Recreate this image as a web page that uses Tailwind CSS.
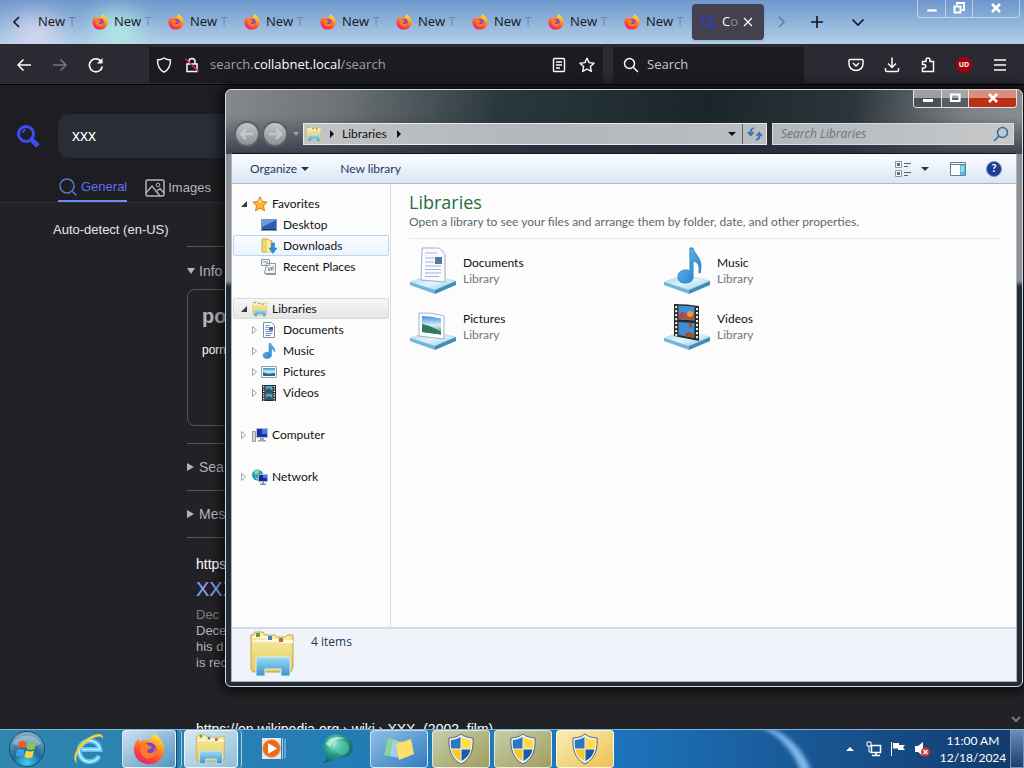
<!DOCTYPE html>
<html lang="en">
<head>
  <meta charset="UTF-8">
  <title>Libraries</title>
  <meta name="viewport" content="width=device-width, initial-scale=1">
  <script src="https://cdn.jsdelivr.net/npm/@tailwindcss/browser@4"></script>
</head>
<body class="relative h-screen flex flex-col overflow-hidden bg-[#222226] font-['Open_Sans','Noto_Sans',sans-serif] text-xs">

<!-- shared icons -->
<svg class="absolute size-0" aria-hidden="true">
  <defs>
    <linearGradient id="ffBody" x1="0.8" y1="0" x2="0.3" y2="1">
      <stop offset="0" stop-color="#fff44f"/><stop offset=".35" stop-color="#ff9a1f"/><stop offset=".7" stop-color="#ff4a35"/><stop offset="1" stop-color="#e8206e"/>
    </linearGradient>
    <linearGradient id="folder" x1="0" y1="0" x2="0" y2="1">
      <stop offset="0" stop-color="#f7efa8"/><stop offset="1" stop-color="#e5c95a"/>
    </linearGradient>
    <linearGradient id="stand" x1="0" y1="0" x2="0" y2="1">
      <stop offset="0" stop-color="#9adcf5"/><stop offset="1" stop-color="#3a93c6"/>
    </linearGradient>
    <linearGradient id="plate" x1="0" y1="0" x2="1" y2="1">
      <stop offset="0" stop-color="#9fd3ea"/><stop offset=".5" stop-color="#e3f4fb"/><stop offset="1" stop-color="#8cc7e2"/>
    </linearGradient>
    <linearGradient id="note" x1="0" y1="0" x2="1" y2="1">
      <stop offset="0" stop-color="#7cc9f5"/><stop offset="1" stop-color="#1a74c2"/>
    </linearGradient>
    <linearGradient id="sky" x1="0" y1="0" x2="0" y2="1">
      <stop offset="0" stop-color="#3f8fd6"/><stop offset=".5" stop-color="#d6eefa"/><stop offset="1" stop-color="#2f7f72"/>
    </linearGradient>
    <radialGradient id="orb" cx=".5" cy=".9" r=".9">
      <stop offset="0" stop-color="#45d0f2"/><stop offset=".45" stop-color="#1b6a9e"/><stop offset="1" stop-color="#8fb4c6"/>
    </radialGradient>
    <radialGradient id="teal" cx=".4" cy=".35" r=".7">
      <stop offset="0" stop-color="#a9f0d8"/><stop offset=".5" stop-color="#25a088"/><stop offset="1" stop-color="#0c5a56"/>
    </radialGradient>
  </defs>
  <symbol id="firefox" viewBox="0 0 16 16">
    <path d="M8 15.6C3.800 15.600.500 12.500.500 8.400.500 6 1.500 4 2.800 2.800c0 .9.300 1.400.7 1.700C4.700 3.300 6 3.300 6.800 3.600 8 3.300 9.600 2.800 10.200.2c2.800 1.400 5.300 4 5.300 8 0 4.200-3.300 7.400-7.500 7.400z" fill="url(#ffBody)"/>
    <circle cx="8" cy="8.600" r="3.800" fill="#7a3fd1"/>
    <path d="M3.500 5c1.800-.6 3.300 0 4.200 1.200 1 .1 1.900.5 1.700 1.100-.3.800-1.800.6-2.200 1.500-.3.900.9 1.700 2.300 1.100 1.100-.5 1.500-1.600 1-3 2 2.500.8 6-2.500 6C4.800 12.900 2.900 9 3.500 5z" fill="#ff7a26"/>
  </symbol>
  <symbol id="explorer" viewBox="0 0 48 48">
    <path d="M4 5l2-3h8l2 3h10l2 2h8l2-2h6v32l-2 5H4l-2-3V5z" fill="url(#folder)" stroke="#c2a54a"/>
    <path d="M4 11h40M4 7h13l3 3h10l3 2h11" fill="none" stroke="#fffbe0" stroke-width="2"/>
    <path d="M7 3h4v4H7z" fill="#6a9c45"/><path d="M19 6h4v4h-4z" fill="#4b7fbd"/><path d="M30 8h4v4h-4z" fill="#c4603f"/>
    <path d="M7 46V29q0-2 2-2h30q2 0 2 2v17h-9v-7H16v7z" fill="url(#stand)" stroke="#d8f1fa"/>
  </symbol>
  <symbol id="shield" viewBox="0 0 28 32">
    <path d="M14 1c3 2.500 7 3.700 12 4 .8 11-2 21-12 26C4 26 1.200 16 2 5c5-.3 9-1.500 12-4z" fill="#eef1f3" stroke="#59676f"/>
    <path d="M13.500 4v11.500H4.200C3.700 12 3.700 9.500 4 7c3.500-.3 6.800-1.300 9.500-3z" fill="#2a78c4"/>
    <path d="M14.500 4v11.500h9.300c.5-3.500.5-6 .2-8.500-3.500-.3-6.800-1.300-9.500-3z" fill="#ffdc45"/>
    <path d="M13.500 16.500V28c-5-2.500-8-6.500-9-11.500z" fill="#fbc926"/>
    <path d="M14.500 16.500V28c5-2.500 8-6.500 9-11.500z" fill="#1a5ca6"/>
  </symbol>
  <symbol id="base" viewBox="0 0 48 48">
    <path d="M1 35l21-7 25 6-21 9z" fill="url(#plate)" stroke="#a9d8ec" stroke-width=".6"/>
    <path d="M1 35l25 8v4L1 38z" fill="#6fb5d8"/><path d="M26 43l21-9v4l-21 9z" fill="#3e8db8"/>
  </symbol>
  <symbol id="document" viewBox="0 0 16 16">
    <path d="M2.500.500h8l3 3v12h-11z" fill="#fff" stroke="#7d8fae"/>
    <path d="M4.500 3.500h4M4.500 9.500h7M4.500 11.500h7M4.500 13.500h5M4.500 5.500h3M4.500 7.500h3" stroke="#6f8fc4"/><path d="M8 5h4v3.500H8z" fill="#3d5f95"/>
  </symbol>
  <symbol id="music" viewBox="0 0 16 16">
    <path d="M8 .5h2c.3 3 4.600 3.500 3.600 8.500-.6-2.200-1.600-3-3.100-3.300V12c0 2-1.800 3.500-4.500 3.500C3.500 15.500 2 14.300 2 12.500 2 10.500 4 9 6.500 9c.6 0 1 .1 1.500.3z" fill="url(#note)" stroke="#2a86cc" stroke-width=".5"/>
  </symbol>
  <symbol id="picture" viewBox="0 0 16 16">
    <path d="M.5 2.500h15v11H.5z" fill="#fff" stroke="#8ba0b2"/><path d="M2 4h12v8H2z" fill="url(#sky)"/><path d="M2 8l5 2 7-1v3H2z" fill="#256e78"/>
  </symbol>
  <symbol id="film" viewBox="0 0 16 16">
    <path d="M1 0h14v16H1z" fill="#20262c"/><path d="M4.500 1h7v6.500h-7zM4.500 8.500h7V15h-7z" fill="#5aa1c4"/><path d="M4.500 5l3-2 4 3v1.500h-7zM4.500 13l3-2 4 2v2h-7z" fill="#2b5668"/>
    <path d="M2.700 1v15M13.300 1v15" stroke="#fff" stroke-width="1.400" stroke-dasharray="1.200 1.200"/>
  </symbol>
  <symbol id="find" viewBox="0 0 16 16"><circle cx="6.500" cy="6.500" r="5" fill="none" stroke="currentColor" stroke-width="1.500"/><path d="M10.200 10.200l4.800 4.800" stroke="currentColor" stroke-width="1.500"/></symbol>
  <symbol id="open" viewBox="0 0 8 8"><path d="M7 1v6H1z" fill="#3a3a3a"/></symbol>
  <symbol id="closed" viewBox="0 0 8 8"><path d="M1.500.500v7l4-3.500z" fill="#fff" stroke="#a0a0a0"/></symbol>
</svg>

<!-- browser tab strip -->
<header class="relative flex h-11 shrink-0 overflow-hidden bg-linear-to-b from-[#6f97cc] via-[#8fb3da] to-[#b4d0e8] text-[13px] text-[#15151a]">
  <span class="absolute left-3 top-4 h-9 w-12 rounded-full bg-[#e3dcf3]/80 blur-md"></span>
  <span class="absolute left-24 top-3 h-9 w-11 rounded-full bg-[#b5f0e4]/90 blur-md"></span>
  <div class="relative flex flex-1 items-center">
    <button aria-label="Scroll left" class="w-[37px] pl-2.5"><svg class="size-3.5" viewBox="0 0 14 14"><path d="M9 2L4 7l5 5" fill="none" stroke="currentColor" stroke-width="1.600"/></svg></button>
    <button class="w-[55px] overflow-hidden border-l border-transparent text-left whitespace-nowrap">New <span class="opacity-30">T</span></button>
    <button class="flex w-19 items-center gap-1.5 whitespace-nowrap"><svg class="size-4"><use href="#firefox"/></svg><span>New <span class="opacity-25">T</span></span></button>
    <button class="flex w-19 items-center gap-1.5 whitespace-nowrap"><svg class="size-4"><use href="#firefox"/></svg><span>New <span class="opacity-25">T</span></span></button>
    <button class="flex w-19 items-center gap-1.5 whitespace-nowrap"><svg class="size-4"><use href="#firefox"/></svg><span>New <span class="opacity-25">T</span></span></button>
    <button class="flex w-19 items-center gap-1.5 whitespace-nowrap"><svg class="size-4"><use href="#firefox"/></svg><span>New <span class="opacity-25">T</span></span></button>
    <button class="flex w-19 items-center gap-1.5 whitespace-nowrap"><svg class="size-4"><use href="#firefox"/></svg><span>New <span class="opacity-25">T</span></span></button>
    <button class="flex w-19 items-center gap-1.5 whitespace-nowrap"><svg class="size-4"><use href="#firefox"/></svg><span>New <span class="opacity-25">T</span></span></button>
    <button class="flex w-19 items-center gap-1.5 whitespace-nowrap"><svg class="size-4"><use href="#firefox"/></svg><span>New <span class="opacity-25">T</span></span></button>
    <button class="flex w-[68px] items-center gap-1.5 whitespace-nowrap"><svg class="size-4"><use href="#firefox"/></svg><span>New <span class="opacity-25">T</span></span></button>
    <div class="flex h-9 w-[72px] items-center rounded-sm bg-[#42414d] pl-2 text-[#fbfbfe] shadow">
      <svg class="size-4 text-[#2f3cc8]" viewBox="0 0 16 16"><circle cx="6.500" cy="6.500" r="4.500" fill="none" stroke="currentColor" stroke-width="2"/><path d="M10 10l5 4.500" stroke="currentColor" stroke-width="3"/></svg>
      <span class="w-6 pl-1.5">C<span class="opacity-40">o</span></span>
      <button aria-label="Close tab" class="ml-0.5"><svg class="size-3" viewBox="0 0 12 12"><path d="M2 2l8 8M10 2l-8 8" stroke="currentColor" stroke-width="1.300"/></svg></button>
    </div>
    <button aria-label="Scroll right" class="ml-2.5"><svg class="size-3.5 text-[#5f7da3]" viewBox="0 0 14 14"><path d="M5 2l5 5-5 5" fill="none" stroke="currentColor" stroke-width="1.600"/></svg></button>
    <button aria-label="New tab" class="ml-[22px]"><svg class="size-3.5" viewBox="0 0 14 14"><path d="M7 1v12M1 7h12" stroke="currentColor" stroke-width="1.600"/></svg></button>
    <button aria-label="List all tabs" class="ml-[27px]"><svg class="size-3.5" viewBox="0 0 14 14"><path d="M1.500 4.500L7 10l5.500-5.500" fill="none" stroke="currentColor" stroke-width="1.600"/></svg></button>
  </div>
  <div class="relative mr-1 flex h-[18px] w-[103px] rounded-b border border-t-0 border-white/50 text-white">
    <button aria-label="Minimize" class="flex w-[28px] justify-center border-r border-white/50"><svg class="h-4 w-4" viewBox="0 0 16 16"><path d="M3 9h10v3H3z" fill="#fff" stroke="#6b8fb5" stroke-width=".5"/></svg></button>
    <button aria-label="Restore" class="flex w-[27px] justify-center border-r border-white/50"><svg class="h-4 w-4" viewBox="0 0 16 16"><path d="M6 5V3h7v7h-2M3.500 6.500h6v6h-6z" fill="none" stroke="#fff" stroke-width="2"/></svg></button>
    <button aria-label="Close" class="flex flex-1 justify-center"><svg class="h-4 w-4" viewBox="0 0 16 16"><path d="M4 4l8 8M12 4l-8 8" stroke="#fff" stroke-width="2.500"/></svg></button>
  </div>
</header>

<!-- browser toolbar -->
<nav class="flex h-10 shrink-0 items-center bg-[#2b2a33] pt-0.5 pr-4 text-[13px] text-[#fbfbfe]">
  <div class="flex w-[149px] items-center gap-5 pl-4">
    <button aria-label="Back"><svg class="size-4" viewBox="0 0 16 16"><path d="M15 8H2M7.500 2.500L2 8l5.500 5.500" fill="none" stroke="currentColor" stroke-width="1.500"/></svg></button>
    <button aria-label="Forward"><svg class="size-4 text-[#77767f]" viewBox="0 0 16 16"><path d="M1 8h13M8.500 2.500L14 8l-5.500 5.500" fill="none" stroke="currentColor" stroke-width="1.500"/></svg></button>
    <button aria-label="Reload"><svg class="size-4" viewBox="0 0 16 16"><path d="M13.500 5A6.500 6.500 0 1 0 14.300 9.500" fill="none" stroke="currentColor" stroke-width="1.600"/><path d="M14.500 1v5.500H9z" fill="currentColor"/></svg></button>
  </div>
  <div class="flex h-9 flex-[456] items-center bg-[#1c1b22] pl-[7px] pr-2">
    <svg class="size-4" viewBox="0 0 16 16"><path d="M8 1c2 1.300 4.200 1.800 6.500 2C14.500 9 12.500 13 8 15.200 3.500 13 1.500 9 1.500 3 3.800 2.800 6 2.300 8 1z" fill="none" stroke="currentColor" stroke-width="1.400"/></svg>
    <svg class="ml-3 size-4" viewBox="0 0 16 16"><path d="M3 7h10v7.500H3zM5 7V4.500a3 3 0 0 1 6 0V7" fill="none" stroke="currentColor" stroke-width="1.500"/><path d="M1.500 1.500l13 13" stroke="#e22850" stroke-width="1.500"/></svg>
    <span class="ml-2.5 flex-1 text-[#a09fa8]">search.<span class="text-[#fbfbfe]">collabnet.local</span>/search</span>
    <button aria-label="Reader view"><svg class="size-4" viewBox="0 0 16 16"><rect x="2.500" y="1.500" width="11" height="13" rx="1" fill="none" stroke="currentColor" stroke-width="1.400"/><path d="M5 5h6M5 8h6M5 11h4" stroke="currentColor" stroke-width="1.300"/></svg></button>
    <button aria-label="Bookmark" class="ml-3"><svg class="size-4" viewBox="0 0 16 16"><path d="M8 1.200l2.100 4.400 4.900.6-3.600 3.300.9 4.900L8 12l-4.300 2.400.9-4.900L1 6.200l4.900-.6z" fill="none" stroke="currentColor" stroke-width="1.400" stroke-linejoin="round"/></svg></button>
  </div>
  <div class="ml-2.5 flex h-9 flex-[188] items-center gap-2 bg-[#1c1b22] pl-2.5">
    <svg class="size-4 shrink-0"><use href="#find"/></svg>
    <input aria-label="Search the web" placeholder="Search" class="w-full bg-transparent outline-none placeholder:text-[#c9c8d0]">
  </div>
  <div class="ml-11 flex items-center gap-5">
    <button aria-label="Pocket"><svg class="size-4" viewBox="0 0 16 16"><path d="M2 2.500h12q1 0 1 1V7a7 6.500 0 0 1-14 0V3.500q0-1 1-1zM5 6l3 3 3-3" fill="none" stroke="currentColor" stroke-width="1.500"/></svg></button>
    <button aria-label="Downloads"><svg class="size-4" viewBox="0 0 16 16"><path d="M8 .5V10M4 6.500l4 4 4-4M1.500 11v2q0 1.500 1.500 1.500h10q1.500 0 1.500-1.500v-2" fill="none" stroke="currentColor" stroke-width="1.500"/></svg></button>
    <button aria-label="Extensions"><svg class="size-4" viewBox="0 0 16 16"><path d="M6 4.500V3a2 2 0 0 1 4 0v1.500h3.500v10h-11V11H4a1.500 1.500 0 0 0 0-3.500H2.500v-3z" fill="none" stroke="currentColor" stroke-width="1.500"/></svg></button>
    <button aria-label="uBlock" class="flex size-4 items-center justify-center rounded-full bg-[#a0000a] text-[7px] font-bold">UD</button>
    <button aria-label="Menu"><svg class="size-4" viewBox="0 0 16 16"><path d="M2 3h12M2 8h12M2 13h12" stroke="currentColor" stroke-width="1.500"/></svg></button>
  </div>
</nav>

<!-- search results page -->
<main class="relative flex-1 overflow-hidden border-t border-black font-['Liberation_Sans',sans-serif] text-[#b5b5b9]">
  <div class="border-b border-[#2e2e34] bg-[#1e1e22] pt-[29px]">
    <form class="flex items-center pl-4">
      <svg class="size-6 text-[#3c4cf5]" viewBox="0 0 24 24"><circle cx="10" cy="10" r="7.500" fill="none" stroke="currentColor" stroke-width="3"/><path d="M7 9q0-3 3-3.500" fill="none" stroke="currentColor" stroke-width="1.500"/><path d="M16 16l6 6" stroke="currentColor" stroke-width="5"/></svg>
      <input aria-label="Search for" value="xxx" class="ml-[18px] h-11 flex-1 rounded-xl bg-[#282d36] px-3.5 text-base font-medium text-white outline-none">
    </form>
    <div class="flex gap-4 pl-[58px] pt-3.5 text-[13px]">
      <a href="#" class="flex h-[30px] items-center gap-[3px] border-b-2 border-[#6d8df5] pt-0.5 text-[#5e70f5]"><svg class="size-5" viewBox="0 0 20 20"><circle cx="9" cy="9" r="7" fill="none" stroke="#5878c8" stroke-width="1.500"/><path d="M14 14l4.500 4.500" stroke="#5878c8" stroke-width="1.500"/></svg>General</a>
      <a href="#" class="flex h-[30px] items-center gap-[3px] pt-px pl-0.5"><svg class="size-5" viewBox="0 0 20 20"><rect x="1" y="2" width="18" height="16" rx="1.500" fill="none" stroke="currentColor" stroke-width="1.500"/><circle cx="13" cy="7" r="1.800" fill="none" stroke="currentColor"/><path d="M1 15l6-7 8 10M12 13l3-2.500 4 4.500" fill="none" stroke="currentColor" stroke-width="1.400"/></svg>Images</a>
    </div>
  </div>
  <div class="pl-[53px] pt-[19px] text-[13px] leading-4 text-[#e6e6ea]">Auto-detect (en-US)</div>
  <div class="ml-[187px] mt-2 w-[640px] text-sm">
    <div class="flex h-[43px] items-center border-t border-[#55555b] pt-1.5"><svg class="mr-1 size-2" viewBox="0 0 8 8"><path d="M0 1h8L4 7z" fill="currentColor"/></svg>Info</div>
    <div class="h-[137px] rounded-lg border border-[#55555b] px-3.5 pt-3">
      <h2 class="text-xl leading-7 font-bold">po</h2>
      <p class="mt-3 text-xs text-white">porn</p>
    </div>
    <div class="mt-[17px] flex h-[47px] items-center border-t border-[#55555b]"><svg class="mr-1 size-2" viewBox="0 0 8 8"><path d="M0 0v8l7-4z" fill="currentColor"/></svg>Sea</div>
    <div class="flex h-12 items-center border-y border-[#55555b]"><svg class="mr-1 size-2" viewBox="0 0 8 8"><path d="M0 0v8l7-4z" fill="currentColor"/></svg>Mes</div>
    <article class="pl-[9px] pt-[18px]">
      <div class="leading-4 text-white">https</div>
      <h3 class="pt-[3px] text-xl leading-7 text-[#8aa2f8]"><a href="#">XXX</a></h3>
      <div class="pt-1 text-[13px] leading-4"><span class="text-[#7e7e84]">Dec</span><br>Dece<br>his d<br>is rec</div>
    </article>
    <div class="pl-[9px] pt-[50px] leading-4 whitespace-nowrap text-white">https://en.wikipedia.org › wiki › XXX_(2002_film)</div>
  </div>
  <svg class="absolute bottom-1 right-0.5 size-3 text-[#77777c]" viewBox="0 0 12 12"><path d="M2 4l4 4 4-4" fill="none" stroke="currentColor" stroke-width="2"/></svg>
</main>

<!-- Libraries window -->
<section class="absolute top-[89px] right-px bottom-[81px] left-[225px] flex flex-col rounded-md border border-[#d5dadd] bg-linear-to-b from-[#8d9195] from-32% to-[#242c37] to-33% px-[5px] pb-1 font-[Lato,'Open_Sans',sans-serif] shadow-[0_0_12px_4px_rgba(0,0,0,0.65)]">
  <div class="absolute inset-x-0 top-0 h-16 rounded-t-md bg-[linear-gradient(100deg,#85888c_0%,#6f7478_14%,#2a383d_34%,#1a2529_60%,#2c353b_78%,#7b8187_92%,#8a8f94_100%)]"></div>
  <div class="absolute inset-x-0 top-0 h-16 rounded-t-md bg-linear-to-b from-transparent from-40% to-[#2c303e]/80"></div>
  <div class="relative flex h-[31px] shrink-0 items-start justify-end">
    <div class="flex h-[18px] w-[104px] overflow-hidden rounded-b border border-t-0 border-[#dfe3e6]">
      <button aria-label="Minimize" class="flex w-[28px] justify-center border-r border-[#dfe3e6] bg-linear-to-b from-[#9b9fa2] from-50% to-[#4b5156] to-50%"><svg class="size-4" viewBox="0 0 16 16"><path d="M3 9h10v3H3z" fill="#fff"/></svg></button>
      <button aria-label="Maximize" class="flex w-[27px] justify-center border-r border-[#dfe3e6] bg-linear-to-b from-[#a4a8ab] from-50% to-[#585d62] to-50%"><svg class="size-4" viewBox="0 0 16 16"><path d="M4 4.500h8.500v6.500H4z" fill="none" stroke="#fff" stroke-width="2.200"/></svg></button>
      <button aria-label="Close" class="flex flex-1 justify-center bg-linear-to-b from-[#d98e80] from-50% to-[#bb2f14] to-50%"><svg class="size-4" viewBox="0 0 16 16"><path d="M4 4l8 8M12 4l-8 8" stroke="#fff" stroke-width="2.500"/></svg></button>
    </div>
  </div>
  <div class="relative mb-1.5 flex h-[26px] shrink-0 items-center pr-[3px]">
    <button aria-label="Back" class="ml-[3px] size-[26px] rounded-full border-2 border-[#5b6067] bg-linear-to-b from-[#c3c5c7] to-[#8d9195]"><svg viewBox="0 0 22 22"><path d="M17 11H6M10 6l-5 5 5 5" fill="none" stroke="#c5c8cb" stroke-width="2.500"/></svg></button>
    <button aria-label="Forward" class="ml-0.5 size-[26px] rounded-full border-2 border-[#5b6067] bg-linear-to-b from-[#c3c5c7] to-[#8d9195]"><svg viewBox="0 0 22 22"><path d="M5 11h11M12 6l5 5-5 5" fill="none" stroke="#c5c8cb" stroke-width="2.500"/></svg></button>
    <button aria-label="Recent pages" class="w-[15px] pl-1"><svg class="size-2" viewBox="0 0 8 8"><path d="M1 2h6L4 6z" fill="#9ea3a8"/></svg></button>
    <div class="flex h-[22px] flex-1 items-center border border-[#e8eaec] bg-linear-to-r from-[#c2c4c6] via-[#b2b7b9] to-[#bbbec1]">
      <svg class="ml-0.5 size-4"><use href="#explorer"/></svg>
      <svg class="ml-1.5 size-2" viewBox="0 0 8 8"><path d="M2 0v8l4-4z" fill="#111"/></svg>
      <span class="ml-1.5 text-[#111]">Libraries</span>
      <svg class="ml-2 size-2" viewBox="0 0 8 8"><path d="M2 0v8l4-4z" fill="#111"/></svg>
      <button aria-label="Previous locations" class="ml-auto mr-1.5"><svg class="size-2" viewBox="0 0 8 8"><path d="M0 2h8L4 6z" fill="#111"/></svg></button>
      <button aria-label="Refresh" class="flex h-full w-6 items-center justify-center border-l border-[#5c6166]"><svg class="size-4" viewBox="0 0 16 16"><path d="M7 2q-4 1-3.500 6M1 6l2.800 3.200L6.500 6M9 14q4-1 3.500-6M15 10l-2.800-3.200L9.500 10" fill="none" stroke="#3f6eb0" stroke-width="1.800"/></svg></button>
    </div>
    <label class="ml-[5px] flex h-[22px] w-[242px] items-center border border-[#d9dcde] bg-linear-to-r from-[#b4b8ba] to-[#c6c8ca] pr-1">
      <input aria-label="Search Libraries" placeholder="Search Libraries" class="w-full bg-transparent pl-2 font-['Open_Sans',sans-serif] italic outline-none placeholder:text-[#6f7478]">
      <svg class="size-4 shrink-0 -scale-x-100 text-[#2f6c9c]"><use href="#find"/></svg>
    </label>
  </div>
  <div class="relative flex min-h-0 flex-1 flex-col border border-t-[#10141a] border-[#aeb6bd] bg-[#fcfcfc] text-[#111]">
    <div class="flex h-[30px] shrink-0 items-center border-b border-[#a9bacd] bg-linear-to-b from-[#fbfdff] via-[#eaf2fa] to-[#d9e6f3] px-[18px] text-[#1e395b]">
      <button class="flex items-center gap-1">Organize <svg class="size-2" viewBox="0 0 8 8"><path d="M0 2h8L4 6z" fill="#1e395b"/></svg></button>
      <button class="ml-[31px]">New library</button>
      <button aria-label="Change your view" class="ml-auto flex items-center gap-2.5"><svg class="h-4 w-4" viewBox="0 0 16 16"><path d="M.5.500h6v6h-6zM.5 9.500h6v6h-6z" fill="#fff" stroke="#8c959e"/><path d="M2 2h3v3H2zM2 11h3v3H2z" fill="#5c6f80"/><path d="M9 2.500h7M9 5.500h4M9 11.500h7M9 14.500h4" stroke="#59636d"/></svg><svg class="size-2" viewBox="0 0 8 8"><path d="M0 2h8L4 6z" fill="#1e395b"/></svg></button>
      <button aria-label="Preview pane" class="ml-[21px]"><svg class="size-4" viewBox="0 0 16 16"><path d="M.5 1.500h15v13H.5z" fill="#fff" stroke="#5f7f9a"/><path d="M.5 3.500h15" stroke="#5f7f9a"/><path d="M10 4h5v10h-5z" fill="#59bbd2"/><path d="M11 6h3M11 8h3M11 10h3" stroke="#e5f8fc"/></svg></button>
      <button aria-label="Help" class="ml-5 -mr-1 flex size-4 items-center justify-center rounded-full border border-[#7f93b8] bg-[#1d3f94] text-[11px] font-bold text-white">?</button>
    </div>
    <div class="flex min-h-0 flex-1">
      <aside class="flex w-[159px] shrink-0 flex-col gap-[21px] border-r border-[#d5dfea] pt-[9px]">
        <ul>
          <li class="flex h-[21px] items-center pl-2"><svg class="size-2"><use href="#open"/></svg><svg class="ml-1 mr-1 size-4" viewBox="0 0 16 16"><path d="M8 .8l2.200 4.700 5 .6-3.700 3.500 1 5.200L8 12.200l-4.500 2.600 1-5.200L.8 6.100l5-.6z" fill="#ffb13a" stroke="#d97f1d"/><path d="M8 2.500l1.500 4H6z" fill="#ffe39a"/></svg>Favorites</li>
          <li class="flex h-[21px] items-center pl-[29px]"><svg class="mr-1.5 size-4" viewBox="0 0 16 16"><path d="M.5 2.500h15v11H.5z" fill="#2c5db8" stroke="#7c97bf"/><path d="M1 3h14L1 10z" fill="#6f9ae0"/><path d="M1 12h14v1H1z" fill="#24364f"/></svg>Desktop</li>
          <li class="mx-px flex h-[21px] items-center rounded-xs border border-[#b8d6f0] bg-linear-to-b from-[#fafcff] to-[#ebf3fd] pl-[27px]"><svg class="mr-1.5 size-4" viewBox="0 0 16 16"><path d="M1 1h6l1 1.500h3V14H1z" fill="#eed872" stroke="#c9ab45"/><path d="M6 2.500l3-1V15l-3-1z" fill="#f9eea8"/><path d="M10.500 5h3v5H16l-4 5.500L8 10h2.500z" fill="#2e8fdc" stroke="#1e6cb0" stroke-width=".5"/></svg>Downloads</li>
          <li class="flex h-[21px] items-center pl-[29px]"><svg class="mr-1.5 size-4" viewBox="0 0 16 16"><path d="M.5.500h8v6h-8zM5.500 4.500h9v10h-11z" fill="#f3f5f6" stroke="#8c979e"/><path d="M2 3h5M7 8l1 4 2-4 1 4M12 7v4" fill="none" stroke="#7d8b93"/><path d="M5 15.500h10" stroke="#8c979e"/></svg>Recent Places</li>
        </ul>
        <ul>
          <li class="mx-px flex h-[21px] items-center rounded-xs border border-[#dadada] bg-linear-to-b from-[#f8f8f8] to-[#e5e5e5] pl-1.5"><svg class="size-2"><use href="#open"/></svg><svg class="mx-1 size-4"><use href="#explorer"/></svg>Libraries</li>
          <li class="flex h-[21px] items-center pl-[19px]"><svg class="size-2"><use href="#closed"/></svg><svg class="ml-0.5 mr-1.5 size-4"><use href="#document"/></svg>Documents</li>
          <li class="flex h-[21px] items-center pl-[19px]"><svg class="size-2"><use href="#closed"/></svg><svg class="ml-0.5 mr-1.5 size-4"><use href="#music"/></svg>Music</li>
          <li class="flex h-[21px] items-center pl-[19px]"><svg class="size-2"><use href="#closed"/></svg><svg class="ml-0.5 mr-1.5 size-4"><use href="#picture"/></svg>Pictures</li>
          <li class="flex h-[21px] items-center pl-[19px]"><svg class="size-2"><use href="#closed"/></svg><svg class="ml-0.5 mr-1.5 size-4"><use href="#film"/></svg>Videos</li>
        </ul>
        <ul>
          <li class="flex h-[21px] items-center pl-2"><svg class="size-2"><use href="#closed"/></svg><svg class="mx-1 size-4" viewBox="0 0 16 16"><path d="M.5 4.500h3v10h-3z" fill="#d5dade" stroke="#8f989e"/><path d="M4.500 1.500h11v9h-11z" fill="#1a2fb0" stroke="#b5bfca"/><path d="M10 2h5v5h-5z" fill="#4d78e0"/><path d="M8 11h4v2h2v1.500H6V13h2z" fill="#9aa4ab"/></svg>Computer</li>
        </ul>
        <ul>
          <li class="flex h-[21px] items-center pl-2"><svg class="size-2"><use href="#closed"/></svg><svg class="mx-1 size-4" viewBox="0 0 16 16"><circle cx="5.500" cy="6" r="5.500" fill="#2a9bb0"/><path d="M2 2q4-2 6 0L6 5 3 6zM3 8l3 1-1 2z" fill="#7fdc9a"/><path d="M6.500 5.500h9v7h-9z" fill="#1428a8" stroke="#a9b6c9"/><path d="M11 6h4v3h-4z" fill="#4d78e0"/><path d="M10 13h2v1.500h2V16H8v-1.500h2z" fill="#8b959c"/></svg>Network</li>
        </ul>
      </aside>
      <div class="flex-1 pt-1.5 pl-[18px]">
        <h1 class="font-['Open_Sans',sans-serif] text-lg leading-6 text-[#1f7040]">Libraries</h1>
        <p class="leading-4 text-[#5f6870]">Open a library to see your files and arrange them by folder, date, and other properties.</p>
        <hr class="mt-2 mr-4 border-[#e4e8ec]">
        <ul class="grid grid-cols-[254px_254px] pt-1">
          <li class="flex h-14 items-start gap-1.5">
            <svg class="mt-1 size-12 shrink-0" viewBox="0 0 48 48"><use href="#base"/><path d="M13 1h17l6 6v28l-24-2z" fill="#f8fafe" stroke="#9fb0c6"/><path d="M30 1q6 2 6 7z" fill="#c9d6e8"/><path d="M16 6h12M16 11h9M16 15h9M16 19h16M16 22.500h16M16 26h16M16 29.500h14" stroke="#a3b3d6"/><path d="M26 10h7v7h-7z" fill="#5778a5"/></svg>
            <div class="pt-3 leading-4">Documents<div class="text-[#73787d]">Library</div></div>
          </li>
          <li class="flex h-14 items-start gap-1.5">
            <svg class="mt-1 size-12 shrink-0" viewBox="0 0 48 48"><use href="#base"/><path d="M27 1h3c1 7 11 10 7 25-1 0-1 0-1-1 1-8-2-10-6-11v16c0 4-3 6-8 6-4 0-7-2-7-6s3-7 8-7c2 0 3 0 4 1z" fill="url(#note)" stroke="#2a86cc"/></svg>
            <div class="pt-3 leading-4">Music<div class="text-[#73787d]">Library</div></div>
          </li>
          <li class="flex h-14 items-start gap-1.5">
            <svg class="mt-1 size-12 shrink-0" viewBox="0 0 48 48"><use href="#base"/><path d="M10 10q12-1 25 3v23l-25-3z" fill="#fdfeff" stroke="#9fb6c9"/><path d="M13 13q9 0 19 2.500v16L13 29z" fill="url(#sky)"/><path d="M13 21q10 2 19 8v2.500L13 29z" fill="#2f7a5c"/></svg>
            <div class="pt-3 leading-4">Pictures<div class="text-[#73787d]">Library</div></div>
          </li>
          <li class="flex h-14 items-start gap-1.5">
            <svg class="mt-1 size-12 shrink-0" viewBox="0 0 48 48"><use href="#base"/><path d="M11 1q13 0 25 2v35l-25-5z" fill="#2b2722"/><path d="M15.500 2.500l16 1v14l-16-1zM15.500 19l16 1v15l-16-3z" fill="#3f8ed8"/><path d="M16 11l4-2 3 2 4-3 4 3v6l-15-1z" fill="#b0562e"/><circle cx="27" cy="11" r="3" fill="#f09c35"/><circle cx="19" cy="12" r="2.500" fill="#b8405e"/><path d="M26 20h3v5l-3-1zM22 30l5-1 4 2v4l-9-2z" fill="#9c5527"/><path d="M13.200 3v31M34 5v32" stroke="#e8eef2" stroke-width="2" stroke-dasharray="2.200 1.800"/></svg>
            <div class="pt-3 leading-4">Videos<div class="text-[#73787d]">Library</div></div>
          </li>
        </ul>
      </div>
    </div>
    <footer class="flex h-[54px] shrink-0 items-start border-t-2 border-[#d3dbe4] bg-[#f0f4fa] pl-[17px] pt-px">
      <svg class="size-12"><use href="#explorer"/></svg>
      <span class="ml-3.5 pt-1 font-['Open_Sans',sans-serif] text-[#1e395b]">4 items</span>
    </footer>
  </div>
</section>

<!-- taskbar -->
<footer class="relative flex h-[39px] shrink-0 items-center overflow-hidden border-t border-[#7fb6da] bg-linear-to-r from-[#2f86ad] via-[#1d74bd] via-60% to-[#12396a]">
  <span class="absolute -top-2 left-[676px] h-48 w-36 -rotate-12 rounded-full border-r-10 border-[#8cc4f5]/90 blur-[2px]"></span>
  <button aria-label="Start" class="ml-2 w-[38px]"><svg class="size-[38px]" viewBox="0 0 38 38"><circle cx="19" cy="19" r="17.500" fill="url(#orb)" stroke="#1d4a66"/><path d="M5 14a15 13 0 0 1 28 0q-14 6-28 0z" fill="#fff" opacity=".3"/><path d="M11 12q4-2 7.500 0L17 18.500q-3.500-2-7.500 0z" fill="#ee5a24"/><path d="M20 12.500q4 2 8 0L26.500 19q-4 2-8 0z" fill="#8cc63e"/><path d="M9 20q4-2 7.500 0L15 26.500q-3.500-2-7.500 0z" fill="#36a3e8"/><path d="M18 20.500q4 2 8 0L24.500 27q-4 2-8 0z" fill="#fdd23a"/></svg></button>
  <button aria-label="Internet Explorer" class="ml-[26px]"><svg class="size-[34px]" viewBox="0 0 34 34"><path d="M27 24A10.500 10.500 0 1 1 28 17.500H10" fill="none" stroke="#5cc6f2" stroke-width="5"/><path d="M27 24A10.500 10.500 0 1 1 28 17.500H10" fill="none" stroke="#c5effd" stroke-width="1.500"/><path d="M5 31C-2 27 6 12 16 6 24 1 32 0 31 7c-1-4-7-3-13 1C8 14 2 25 5 31z" fill="#f6d23c"/></svg></button>
  <button aria-label="Firefox" class="ml-4 flex h-[38px] w-[54px] items-center justify-center rounded-sm border border-white/70 bg-linear-to-br from-[#cfe3ef] to-[#4e94c0]"><svg class="size-8"><use href="#firefox"/></svg></button>
  <span class="h-[38px] w-1.5 rounded-r-sm border-x border-l-[#1a4866] border-white/60"></span>
  <button aria-label="Windows Explorer" class="ml-0.5 flex h-[38px] w-[54px] items-center justify-center rounded-sm border border-white/80 bg-linear-to-br from-[#d9eaf3] to-[#8fbdd8]"><svg class="h-8 w-9"><use href="#explorer"/></svg></button>
  <span class="h-[38px] w-1 rounded-r-sm border-r border-white/60"></span>
  <button aria-label="Media Player" class="ml-4"><svg class="h-[26px] w-7" viewBox="0 0 28 26"><path d="M4 2h19v21H4z" fill="#e2eaf0"/><path d="M24.500 2v21M27 3v19" stroke="#a8cbe4"/><circle cx="13.500" cy="12.500" r="9" fill="#ec6a1c" stroke="#f9b27a"/><path d="M10 7v11l9-5.500z" fill="#fff"/></svg></button>
  <button aria-label="Messenger" class="ml-[34px]"><svg class="h-[34px] w-9" viewBox="0 0 36 34"><path d="M3 15C3 7 9 2 17 2c9 0 16 6 16 13s-6 11-13 11l-3 0c-4 2-8 4-14 5 3-2 4-5 4-7-2-2-4-5-4-9z" fill="url(#teal)"/><circle cx="22" cy="16" r="7" fill="#58c9ae" opacity=".6"/><path d="M6 12c3-7 12-9 19-5-7-1-12 2-15 8z" fill="#d2f7ea" opacity=".7"/></svg></button>
  <button aria-label="Sticky Notes" class="ml-[14px] flex h-[38px] w-[58px] items-center justify-center rounded-sm border border-white/70 bg-linear-to-br from-[#8fc0e4] to-[#2b7cc0]"><svg class="h-7 w-8" viewBox="0 0 32 28"><path d="M5 3l9 2-3 17-10-2z" fill="#8ad69a"/><path d="M10 5l10 2-3 16-10-2z" fill="#a5cdf0"/><path d="M13 9l15-5 3 15-15 6z" fill="#fbe266"/></svg></button>
  <button aria-label="Security prompt" class="ml-1 flex h-[38px] w-[58px] items-center justify-center rounded-sm border border-white/70 bg-linear-to-br from-[#c6cfaa] to-[#a09e60]"><svg class="h-8 w-7"><use href="#shield"/></svg></button>
  <button aria-label="Security prompt" class="ml-1 flex h-[38px] w-[58px] items-center justify-center rounded-sm border border-white/70 bg-linear-to-br from-[#c6cfaa] to-[#a09e60]"><svg class="h-8 w-7"><use href="#shield"/></svg></button>
  <button aria-label="Security prompt" class="ml-1 flex h-[38px] w-[58px] items-center justify-center rounded-sm border border-white/80 bg-linear-to-br from-[#f9eeb4] to-[#eec04e]"><svg class="h-8 w-7"><use href="#shield"/></svg></button>
  <div class="relative ml-auto flex items-center text-white">
    <button aria-label="Show hidden icons"><svg class="size-2" viewBox="0 0 8 8"><path d="M0 6h8L4 2z" fill="#fff"/></svg></button>
    <svg class="ml-3 size-4" viewBox="0 0 16 16"><path d="M5.500 4.500h9v7h-9zM10 12v2M6 14.500h8" fill="none" stroke="#fff" stroke-width="1.500"/><path d="M1 1h4v4H1zM3 5v6h2" fill="none" stroke="#fff"/></svg>
    <svg class="ml-2 size-4" viewBox="0 0 16 16"><path d="M1.500 1v14" stroke="#fff"/><path d="M3 2h6v2h6l-2 2.500L15 9H8V7.500H3z" fill="#fff"/></svg>
    <svg class="ml-2 size-4" viewBox="0 0 16 16"><path d="M1 5h3l5-4v14l-5-4H1z" fill="#fff"/><circle cx="11.500" cy="11" r="4.500" fill="#d6342c"/><path d="M9.500 9l4 4M13.500 9l-4 4" stroke="#fff" stroke-width="1.500"/></svg>
    <div class="ml-1.5 w-[74px] text-center font-[Lato,'Open_Sans',sans-serif] leading-[17px]">11:00 AM<br>12/18/2024</div>
    <button aria-label="Show desktop" class="h-[38px] w-3.5 border border-[#6d94bd] bg-linear-to-b from-[#6d8cb4] to-[#1a3f70]"></button>
  </div>
</footer>
</body>
</html>
